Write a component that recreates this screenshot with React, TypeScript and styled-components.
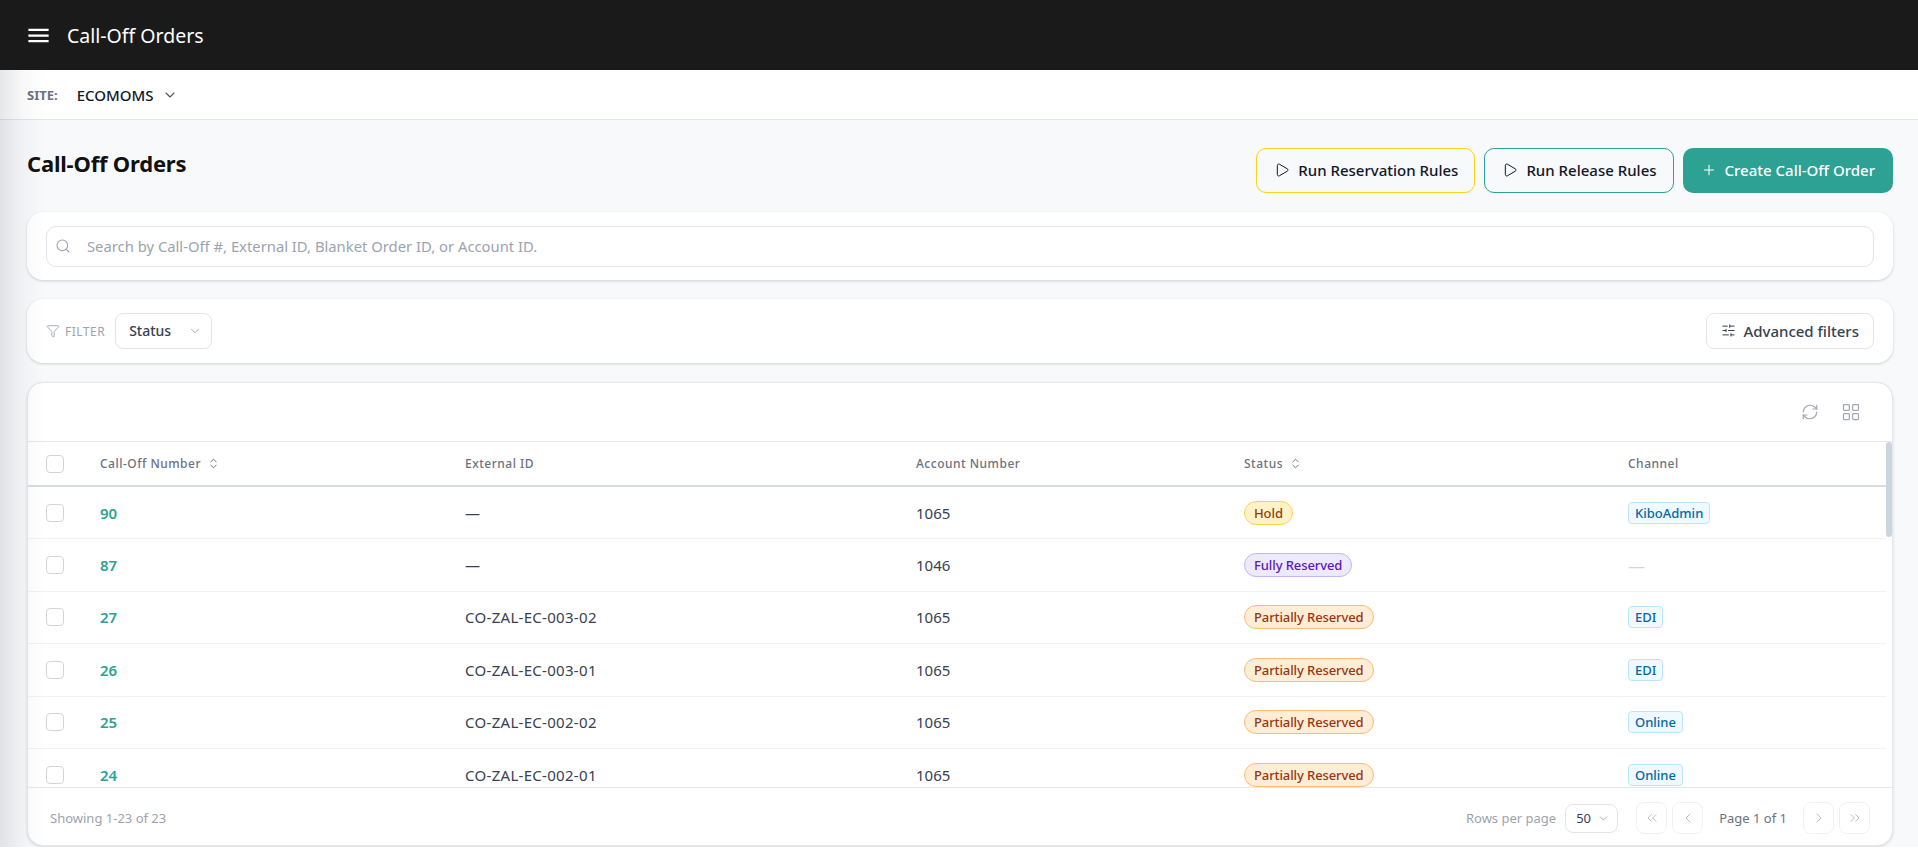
import React from "react";
import styled, { createGlobalStyle } from "styled-components";
import {
	ChevronDown,
	ChevronLeft,
	ChevronRight,
	ChevronsLeft,
	ChevronsRight,
	ChevronsUpDown,
	Funnel,
	LayoutGrid,
	Play,
	Plus,
	RefreshCw,
	Search,
	SlidersHorizontal
} from "lucide-react";
import { MdMenu } from "react-icons/md";

const GlobalStyle = createGlobalStyle`
	html, body {
		margin: 0;
		padding: 0;
		background: #fff;
		overflow: hidden;
	}
	* {
		box-sizing: border-box;
	}
	body {
		font-family: "Noto Sans", "Open Sans", Arial, sans-serif;
		color: #111827;
	}
`;

type StatusKind = "hold" | "full" | "partial";

const rows: { id: number; ext: string; account: number; status: StatusKind; channel: string }[] = [
	{ id: 90, ext: "—", account: 1065, status: "hold", channel: "KiboAdmin" },
	{ id: 87, ext: "—", account: 1046, status: "full", channel: "" },
	{ id: 27, ext: "CO-ZAL-EC-003-02", account: 1065, status: "partial", channel: "EDI" },
	{ id: 26, ext: "CO-ZAL-EC-003-01", account: 1065, status: "partial", channel: "EDI" },
	{ id: 25, ext: "CO-ZAL-EC-002-02", account: 1065, status: "partial", channel: "Online" },
	{ id: 24, ext: "CO-ZAL-EC-002-01", account: 1065, status: "partial", channel: "Online" }
];

const statusLabel: Record<StatusKind, string> = {
	hold: "Hold",
	full: "Fully Reserved",
	partial: "Partially Reserved"
};

const statusColors: Record<StatusKind, { bg: string; line: string; text: string }> = {
	hold: { bg: "#fef3c7", line: "#fcd34d", text: "#92400e" },
	full: { bg: "#ede9fe", line: "#c4b5fd", text: "#5b17c0" },
	partial: { bg: "#ffedd5", line: "#fdba74", text: "#9a3412" }
};

export default function App() {
	return (
		<Page>
			<GlobalStyle />
			<TopBar>
				<MenuButton>
					<MdMenu size={27} />
				</MenuButton>
				<TopTitle>Call-Off Orders</TopTitle>
			</TopBar>
			<Content>
				<SiteBar>
					<SiteLabel>SITE:</SiteLabel>
					<SiteName>ECOMOMS</SiteName>
					<ChevronDown size={16} color="#4b5563" strokeWidth={1.6} />
				</SiteBar>
				<Main>
					<TitleRow>
						<Heading>Call-Off Orders</Heading>
						<Actions>
							<OutlineButton $line="#fcd116">
								<Play size={16} strokeWidth={1.5} />
								Run Reservation Rules
							</OutlineButton>
							<OutlineButton $line="#2da193">
								<Play size={16} strokeWidth={1.5} />
								Run Release Rules
							</OutlineButton>
							<PrimaryButton>
								<Plus size={16} strokeWidth={1.6} />
								Create Call-Off Order
							</PrimaryButton>
						</Actions>
					</TitleRow>
					<SearchCard>
						<SearchBox>
							<Search size={16} color="#9ca3af" strokeWidth={1.6} />
							<SearchInput placeholder="Search by Call-Off #, External ID, Blanket Order ID, or Account ID." />
						</SearchBox>
					</SearchCard>
					<FilterCard>
						<FilterLabel>
							<Funnel size={14} strokeWidth={1.5} />
							FILTER
						</FilterLabel>
						<FilterSelect>
							Status
							<ChevronDown size={14} color="#9ca3af" strokeWidth={1.6} />
						</FilterSelect>
						<AdvancedButton>
							<SlidersHorizontal size={15} strokeWidth={1.6} />
							Advanced filters
						</AdvancedButton>
					</FilterCard>
					<TableCard>
						<TableTools>
							<RefreshCw size={18} color="#a3a8b2" strokeWidth={1.6} />
							<LayoutGrid size={20} color="#a3a8b2" strokeWidth={1.5} />
						</TableTools>
						<TableArea>
							<TableBody>
								<HeadRow>
									<CheckCell>
										<Checkbox />
									</CheckCell>
									<HeadCell>
										Call-Off Number
										<ChevronsUpDown size={13} strokeWidth={1.8} />
									</HeadCell>
									<HeadCell>External ID</HeadCell>
									<HeadCell>Account Number</HeadCell>
									<HeadCell>
										Status
										<ChevronsUpDown size={13} strokeWidth={1.8} />
									</HeadCell>
									<HeadCell>Channel</HeadCell>
								</HeadRow>
								{rows.map((r) => (
									<Row key={r.id}>
										<CheckCell>
											<Checkbox />
										</CheckCell>
										<OrderLink>{r.id}</OrderLink>
										<ExternalCell>{r.ext}</ExternalCell>
										<Cell>{r.account}</Cell>
										<Cell>
											<StatusPill $kind={r.status}>{statusLabel[r.status]}</StatusPill>
										</Cell>
										<Cell>{r.channel ? <ChannelTag>{r.channel}</ChannelTag> : <EmptyDash>—</EmptyDash>}</Cell>
									</Row>
								))}
							</TableBody>
							<ScrollTrack>
								<ScrollThumb />
							</ScrollTrack>
						</TableArea>
						<TableFooter>
							<Showing>Showing 1-23 of 23</Showing>
							<Pager>
								<PagerLabel>Rows per page</PagerLabel>
								<PageSize>
									50
									<ChevronDown size={13} color="#9ca3af" strokeWidth={1.6} />
								</PageSize>
								<PagerButtons>
									<PageButton>
										<ChevronsLeft size={16} strokeWidth={1.5} />
									</PageButton>
									<PageButton>
										<ChevronLeft size={16} strokeWidth={1.5} />
									</PageButton>
									<PageText>Page 1 of 1</PageText>
									<PageButton>
										<ChevronRight size={16} strokeWidth={1.5} />
									</PageButton>
									<PageButton>
										<ChevronsRight size={16} strokeWidth={1.5} />
									</PageButton>
								</PagerButtons>
							</Pager>
						</TableFooter>
					</TableCard>
				</Main>
			</Content>
		</Page>
	);
}

const Page = styled.div`
	display: flex;
	flex-direction: column;
	width: 100%;
	height: 847px;
`;

const TopBar = styled.header`
	display: flex;
	align-items: center;
	flex: 0 0 70px;
	background: #1a1a1a;
	color: #fff;
	padding-left: 25px;
`;

const MenuButton = styled.div`
	display: flex;
	width: 27px;
	margin-right: 15px;
`;

const TopTitle = styled.div`
	font-size: 19.5px;
	font-weight: 400;
`;

const Content = styled.div`
	position: relative;
	flex: 1;
	display: flex;
	flex-direction: column;
	min-height: 0;
	&::before {
		content: "";
		position: absolute;
		top: 0;
		bottom: 0;
		left: 0;
		width: 44px;
		background: linear-gradient(90deg, rgba(17, 24, 39, 0.1), rgba(17, 24, 39, 0.03) 50%, rgba(17, 24, 39, 0));
		pointer-events: none;
	}
`;

const SiteBar = styled.div`
	display: flex;
	align-items: center;
	flex: 0 0 50px;
	background: #fff;
	border-bottom: 1px solid #e2e5ea;
	padding-left: 27px;
`;

const SiteLabel = styled.span`
	font-size: 13px;
	font-weight: 700;
	color: #6b7280;
	margin-right: 19px;
`;

const SiteName = styled.span`
	font-size: 15px;
	font-weight: 500;
	color: #111827;
	margin-right: 8px;
`;

const Main = styled.main`
	flex: 1;
	display: flex;
	flex-direction: column;
	min-height: 0;
	background: #f8f9fb;
	padding: 28px 25px 1px 27px;
`;

const TitleRow = styled.div`
	display: flex;
	justify-content: space-between;
	align-items: flex-start;
	height: 64px;
`;

const Heading = styled.h1`
	margin: 0;
	font-size: 22px;
	line-height: 30px;
	font-weight: 700;
	letter-spacing: -0.2px;
	color: #111;
`;

const Actions = styled.div`
	display: flex;
	gap: 9px;
`;

const OutlineButton = styled.div<{ $line: string }>`
	display: flex;
	align-items: center;
	gap: 8px;
	height: 45px;
	padding: 0 16px 1px 17px;
	border: 1px solid ${(p) => p.$line};
	border-radius: 10px;
	font-size: 15px;
	font-weight: 500;
	color: #111827;
`;

const PrimaryButton = styled.div`
	display: flex;
	align-items: center;
	gap: 8px;
	height: 45px;
	padding: 0 18px 1px;
	border-radius: 10px;
	background: #2da193;
	font-size: 15px;
	font-weight: 500;
	color: #fff;
`;

const SearchCard = styled.section`
	flex: 0 0 68px;
	display: flex;
	align-items: center;
	padding: 0 19px;
	background: #fff;
	border-radius: 16px;
	box-shadow: 0 1px 3px rgba(17, 24, 39, 0.18);
	margin-bottom: 19px;
`;

const SearchBox = styled.div`
	flex: 1;
	display: flex;
	align-items: center;
	gap: 16px;
	height: 41px;
	padding: 0 8px;
	border: 1px solid #e3e5ea;
	border-radius: 10px;
`;

const SearchInput = styled.input`
	flex: 1;
	border: 0;
	outline: 0;
	padding: 0;
	background: transparent;
	font-family: inherit;
	font-size: 14.8px;
	color: #374151;
	&::placeholder {
		color: #9ca3af;
	}
`;

const FilterCard = styled.section`
	flex: 0 0 64px;
	display: flex;
	align-items: center;
	padding: 0 19px;
	background: #fff;
	border-radius: 16px;
	box-shadow: 0 1px 3px rgba(17, 24, 39, 0.18);
	margin-bottom: 19px;
`;

const FilterLabel = styled.div`
	display: flex;
	align-items: center;
	gap: 5px;
	font-size: 12px;
	letter-spacing: 0.5px;
	color: #9ca3af;
	margin-right: 10px;
`;

const FilterSelect = styled.div`
	display: flex;
	align-items: center;
	justify-content: space-between;
	width: 97px;
	height: 36px;
	padding: 0 9px 1px 13px;
	border: 1px solid #e3e5ea;
	border-radius: 8px;
	font-size: 14px;
	font-weight: 500;
	color: #374151;
`;

const AdvancedButton = styled.div`
	display: flex;
	align-items: center;
	gap: 7px;
	margin-left: auto;
	height: 36px;
	padding: 0 14px 1px;
	border: 1px solid #e3e5ea;
	border-radius: 8px;
	font-size: 15px;
	font-weight: 500;
	color: #374151;
`;

const TableCard = styled.section`
	flex: 1;
	display: flex;
	flex-direction: column;
	min-height: 0;
	background: #fff;
	border: 1px solid #e5e7eb;
	border-radius: 16px;
	box-shadow: 0 1px 3px rgba(17, 24, 39, 0.14);
	overflow: hidden;
`;

const TableTools = styled.div`
	flex: 0 0 59px;
	display: flex;
	align-items: center;
	justify-content: flex-end;
	gap: 22px;
	padding-right: 31px;
	border-bottom: 1px solid #e5e7eb;
`;

const TableArea = styled.div`
	flex: 1;
	display: flex;
	min-height: 0;
	overflow: hidden;
`;

const TableBody = styled.div`
	flex: 1;
	min-width: 0;
	overflow: hidden;
`;

const columns = "72px 365px 451px 328px 384px 1fr";

const HeadRow = styled.div`
	display: grid;
	grid-template-columns: ${columns};
	align-items: center;
	height: 45px;
	border-bottom: 2px solid #d9dce1;
`;

const Row = styled.div`
	display: grid;
	grid-template-columns: ${columns};
	align-items: center;
	height: 52.4px;
	border-bottom: 1px solid #f1f2f4;
`;

const CheckCell = styled.div`
	display: flex;
	padding-left: 18px;
`;

const Checkbox = styled.span`
	width: 18px;
	height: 18px;
	border: 1px solid #d1d5db;
	border-radius: 4px;
	background: #fff;
`;

const HeadCell = styled.div`
	display: flex;
	align-items: center;
	gap: 6px;
	font-size: 12px;
	font-weight: 500;
	letter-spacing: 0.5px;
	color: #6b7280;
	svg {
		color: #6b7280;
	}
`;

const Cell = styled.div`
	font-size: 15px;
	color: #374151;
`;

const ExternalCell = styled(Cell)`
	letter-spacing: 0.3px;
`;

const OrderLink = styled.a`
	font-size: 15px;
	font-weight: 600;
	color: #2da193;
`;

const StatusPill = styled.span<{ $kind: StatusKind }>`
	display: inline-flex;
	align-items: center;
	height: 24px;
	padding: 0 9px;
	border-radius: 12px;
	border: 1px solid ${(p) => statusColors[p.$kind].line};
	background: ${(p) => statusColors[p.$kind].bg};
	color: ${(p) => statusColors[p.$kind].text};
	font-size: 13px;
	font-weight: 500;
	letter-spacing: -0.1px;
`;

const ChannelTag = styled.span`
	display: inline-flex;
	align-items: center;
	height: 22px;
	padding: 0 6px;
	border-radius: 4px;
	border: 1px solid #bae6fd;
	background: #f0f9ff;
	color: #0369a1;
	font-size: 13px;
	font-weight: 500;
`;

const EmptyDash = styled.span`
	font-size: 17px;
	color: #d1d5db;
`;

const ScrollTrack = styled.div`
	flex: 0 0 6px;
`;

const ScrollThumb = styled.div`
	height: 95px;
	background: #cbd5e1;
	border-radius: 3px;
`;

const TableFooter = styled.footer`
	flex: 0 0 58px;
	display: flex;
	align-items: center;
	justify-content: space-between;
	padding: 3px 22px 0 22px;
	border-top: 1px solid #e5e7eb;
`;

const Showing = styled.span`
	font-size: 13px;
	color: #9ca3af;
`;

const Pager = styled.div`
	display: flex;
	align-items: center;
`;

const PagerLabel = styled.span`
	font-size: 13px;
	color: #9ca3af;
	margin-right: 9px;
`;

const PageSize = styled.div`
	display: flex;
	align-items: center;
	justify-content: space-between;
	width: 53px;
	height: 29px;
	padding: 0 7px 0 10px;
	border: 1px solid #e3e5ea;
	border-radius: 8px;
	font-size: 13px;
	color: #374151;
	margin-right: 18px;
`;

const PagerButtons = styled.div`
	display: flex;
	align-items: center;
	gap: 5px;
`;

const PageButton = styled.div`
	display: flex;
	align-items: center;
	justify-content: center;
	width: 31px;
	height: 32px;
	border: 1px solid #f0f1f3;
	border-radius: 8px;
	color: #b9bdc5;
`;

const PageText = styled.span`
	font-size: 13px;
	color: #6b7280;
	margin: 0 11px;
`;
